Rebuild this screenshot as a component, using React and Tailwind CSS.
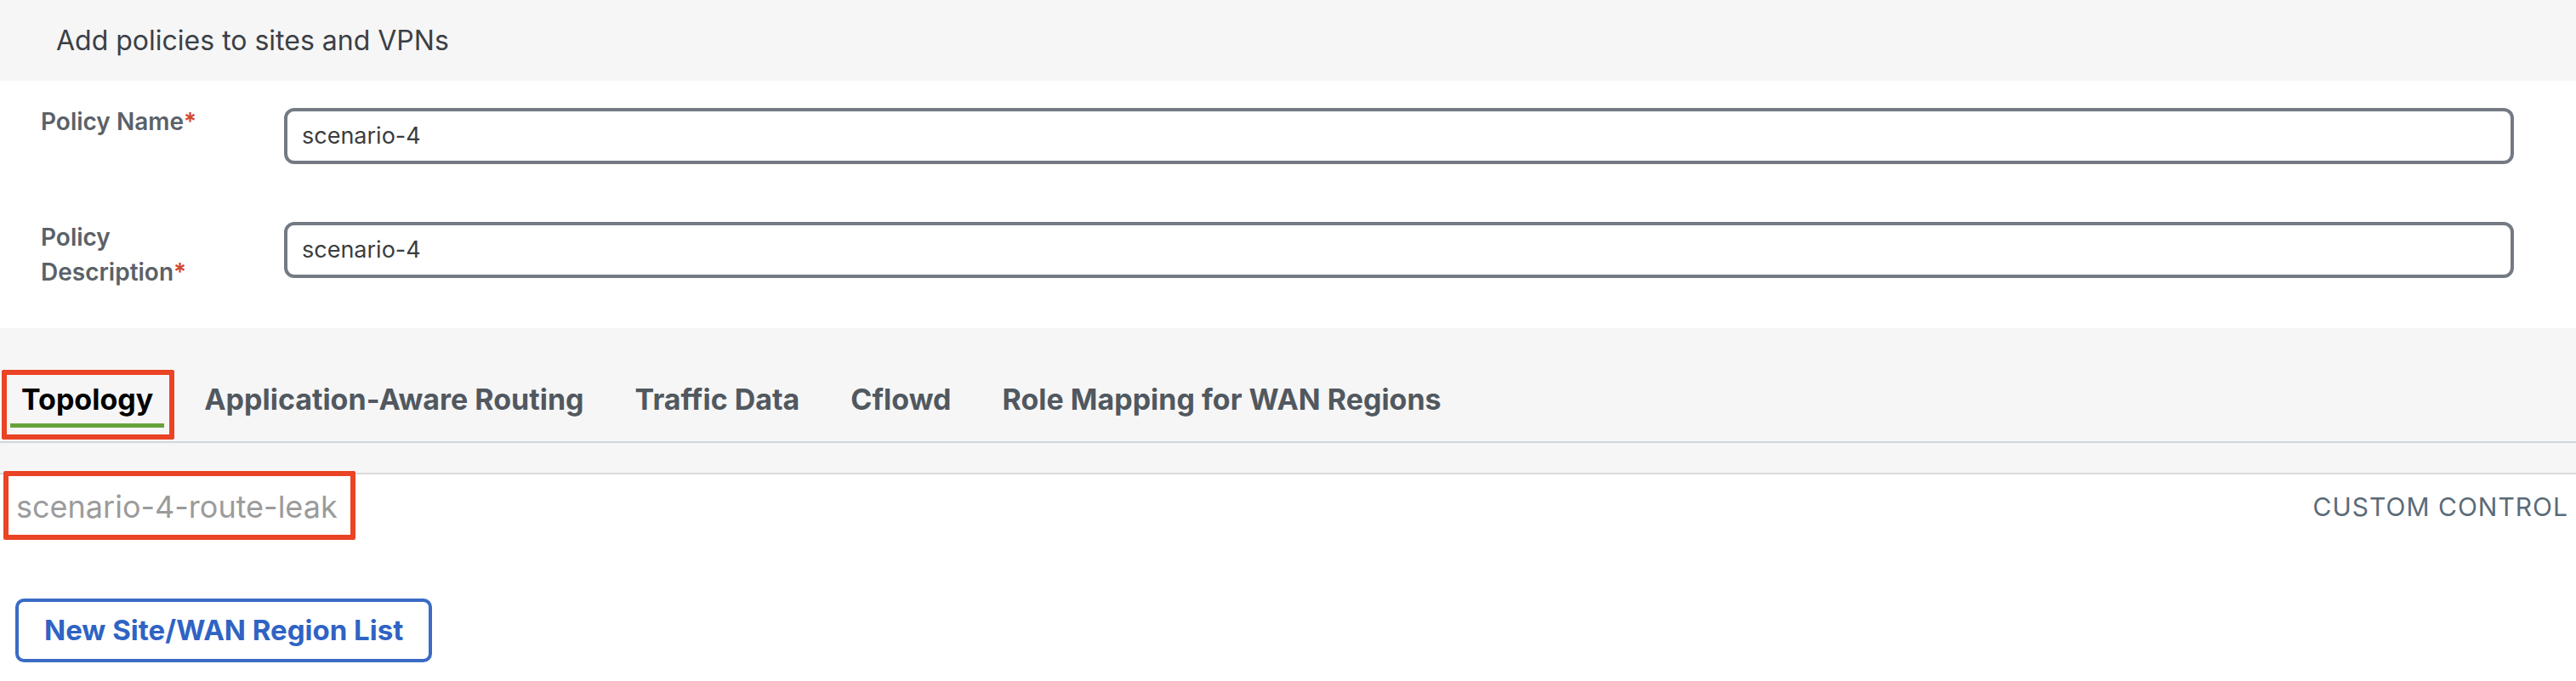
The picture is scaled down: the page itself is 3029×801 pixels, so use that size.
export default function App() {
  const tabs = [
    "Topology",
    "Application-Aware Routing",
    "Traffic Data",
    "Cflowd",
    "Role Mapping for WAN Regions",
  ];
  return (
    <div className="relative w-[3029px] h-[801px] overflow-hidden bg-white font-['Inter',sans-serif]">
      {/* header */}
      <div className="h-[95px] bg-[#f6f6f6] flex items-center pl-[66px]">
        <span className="text-[32px] text-[#3b4046] leading-none">Add policies to sites and VPNs</span>
      </div>

      {/* form */}
      <div className="h-[291px] bg-white pl-[48px] pr-[73px] pt-[32px] flex flex-col gap-[68px]">
        <div className="flex items-start">
          <div className="w-[286px] -mt-[5px] text-[28px] leading-[42px] font-semibold text-[#5b6168]">
            Policy Name<span className="text-[#d2492b]">*</span>
          </div>
          <div className="flex-1 h-[66px] border-[4px] border-[#737a83] rounded-[12px] flex items-center px-[17px] text-[27px] text-[#3a3d40]">
            scenario-4
          </div>
        </div>
        <div className="flex items-start">
          <div className="w-[286px] -mt-[2px] text-[28px] leading-[41px] font-semibold text-[#5b6168]">
            Policy
            <br />
            Description<span className="text-[#d2492b]">*</span>
          </div>
          <div className="flex-1 h-[66px] border-[4px] border-[#737a83] rounded-[12px] flex items-center px-[17px] text-[27px] text-[#3a3d40]">
            scenario-4
          </div>
        </div>
      </div>

      {/* tabs */}
      <div className="bg-[#f6f6f6] border-b-[2px] border-[#dcd9da] h-[172px]">
        <div className="border-b-[2px] border-[#d1d6db] pt-[64px] pb-[16px] pl-[12px] flex gap-[34px]">
          {tabs.map((t, i) => (
            <div key={t} className="flex flex-col">
              <div
                className={
                  "px-[13px] text-[34px] leading-[40px] font-bold whitespace-nowrap " +
                  (i === 0 ? "text-black" : "text-[#51585f]")
                }
              >
                {t}
              </div>
              <div className={"mt-[8px] h-[5px] " + (i === 0 ? "bg-[#67a23b]" : "bg-transparent")} />
            </div>
          ))}
        </div>
      </div>

      {/* content */}
      <div className="flex items-center justify-between pl-[19px] pr-[9px] pt-[14px]">
        <span className="text-[36px] leading-[48px] text-[#9b9b9b]">scenario-4-route-leak</span>
        <span className="text-[30px] leading-[48px] tracking-[1px] text-[#5a6b78]">CUSTOM CONTROL</span>
      </div>
      <div className="pl-[18px] pt-[84px]">
        <button className="h-[75px] px-[30px] border-[4px] border-[#3a6bc5] rounded-[10px] bg-white text-[33px] font-bold text-[#2f63c4]">
          New Site/WAN Region List
        </button>
      </div>

      {/* annotation boxes */}
      <div className="absolute left-[2px] top-[435px] w-[203px] h-[82px] border-[6px] border-[#ea4325] rounded-[2px]" />
      <div className="absolute left-[4px] top-[554px] w-[414px] h-[81px] border-[6px] border-[#ea4325] rounded-[2px]" />
    </div>
  );
}
